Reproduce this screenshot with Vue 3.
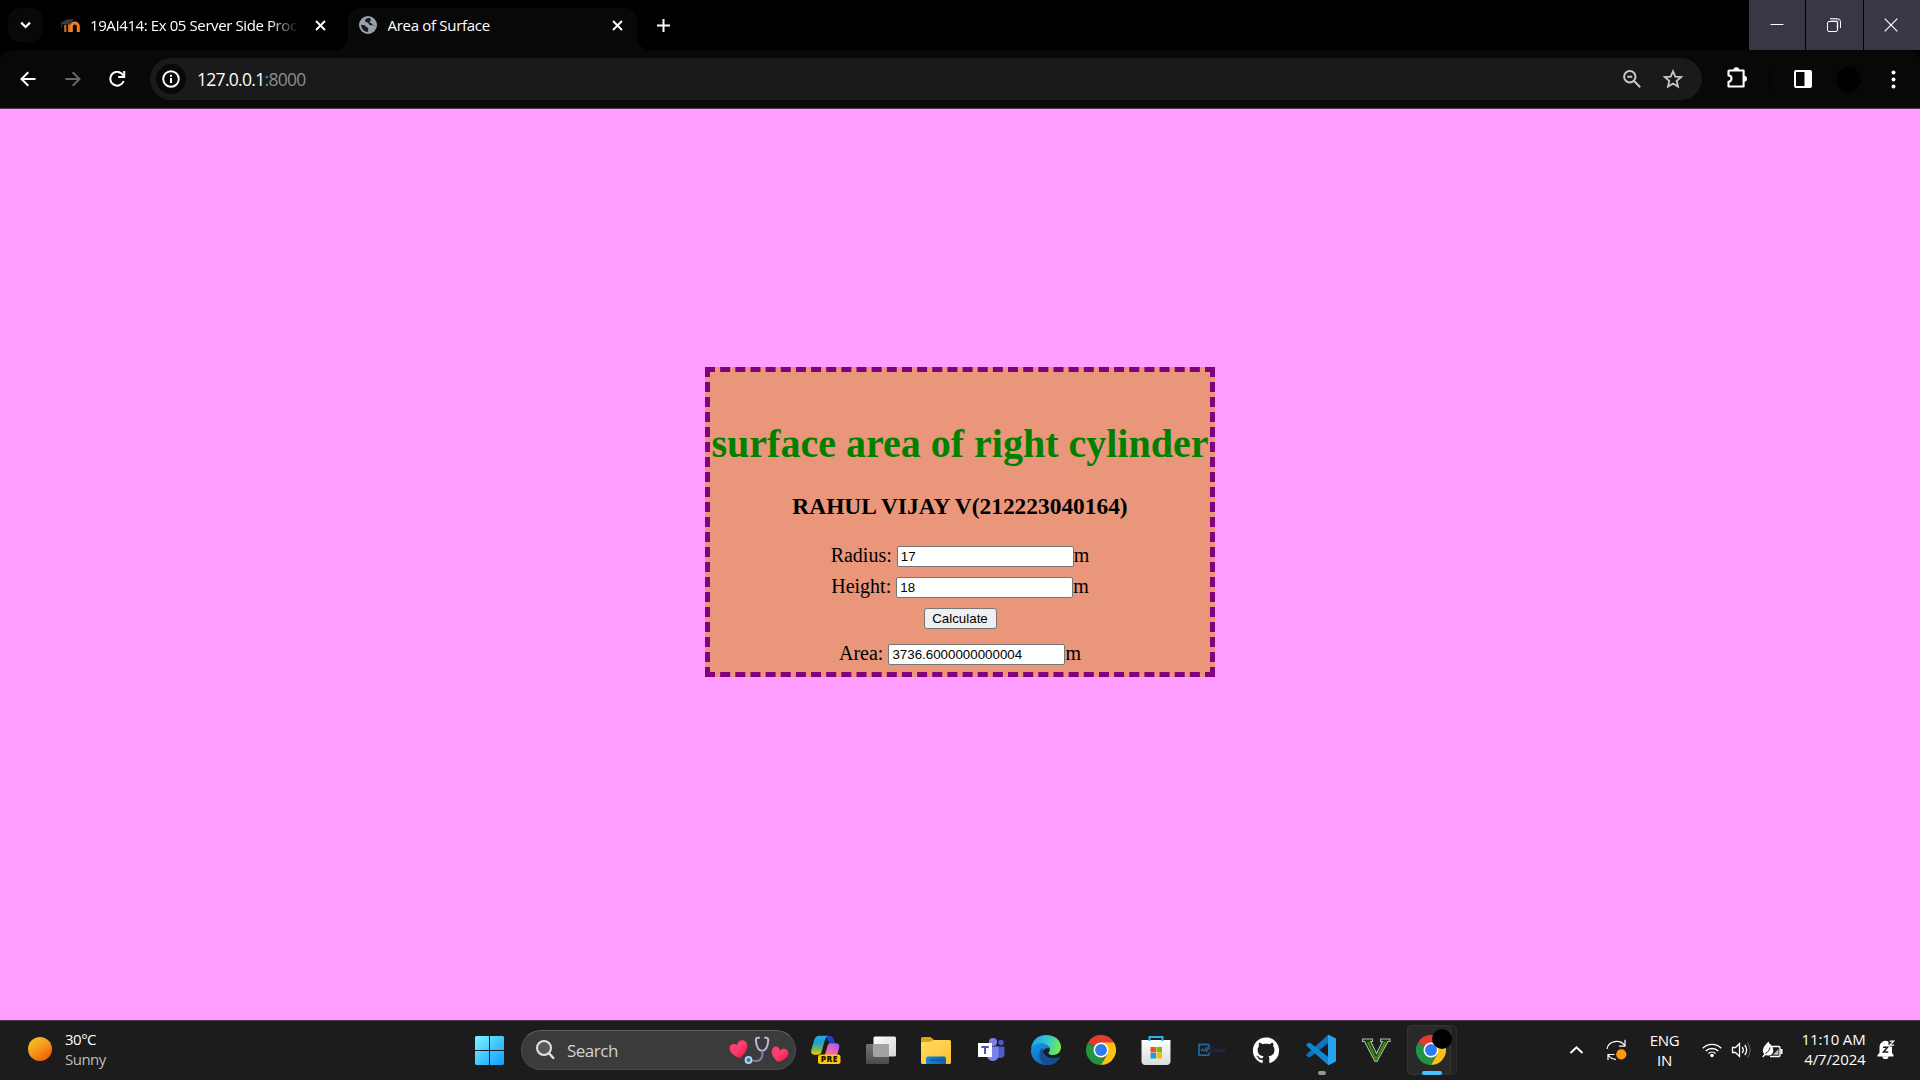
<script setup>
import { ref } from 'vue'

const radius = ref('17')
const height = ref('18')
const area = ref('3736.6000000000004')
</script>

<template>
  <div class="screen">
    <header class="tabstrip">
      <button class="tab-search" aria-label="Search tabs">
        <svg width="12" height="12" viewBox="0 0 12 12"><path d="M1.200 3.600 5.600 8l4.400-4.400" fill="none" stroke="#fff" stroke-width="2.200" /></svg>
      </button>
      <div class="tab inactive">
        <svg class="moodle" width="20" height="16" viewBox="0 0 20 16">
          <path d="M11.300 15V9.500a3.500 3.500 0 0 1 7 0V15" fill="none" stroke="#ee8129" stroke-width="3" />
          <path d="M5.300 15V8M9 15V7" stroke="#c46d2a" stroke-width="2.200" />
          <path d="M0 6 7 2.500l7-.5-2.500 3.500-2 2H3z" fill="#3f3836" />
          <path d="M1.500 6v5" stroke="#37302c" stroke-width="1" />
        </svg>
        <span class="tab-title faded">19AI414: Ex 05 Server Side Proc</span>
        <svg class="x" width="11" height="11" viewBox="0 0 11 11"><path d="m1 1 9 9M10 1l-9 9" stroke="#fff" stroke-width="1.900" /></svg>
      </div>
      <div class="tab active">
        <svg width="18" height="18" viewBox="0 0 18 18">
          <circle cx="9" cy="9" r="9" fill="#9aa0a9" />
          <path d="M10.300 1.900C7.200 2 5.900 3.300 6 5c.1 1.500 2.600 1 3.300 2 .5.900 1.300 2.700 3.200 2.300 1.400-.3 3.600-.3 3.500.7-.5 3-3 5.700-6.300 6-1.400-.2-1-1.500-.4-2.500.6-1.400-.6-1.800-1.600-2.300-.9-1.700-2.800-2.700-5.600-2.500C2.300 12.800 5 15.800 9 16c4 0 7-3 7-7-1.500.5-2.900-.3-3.300-1.500-2.100-.2-2.700-1.800-1.100-2.900.7-1 .2-2-1.300-2.700z" fill="#17191b" />
        </svg>
        <span class="tab-title second">Area of Surface</span>
        <svg class="x" width="11" height="11" viewBox="0 0 11 11"><path d="m1 1 9 9M10 1l-9 9" stroke="#fff" stroke-width="1.900" /></svg>
      </div>
      <svg class="plus" width="13" height="13" viewBox="0 0 13 13"><path d="M6.500 0v13M0 6.500h13" stroke="#fff" stroke-width="2" /></svg>
      <div class="caption">
        <span><svg width="14" height="14" viewBox="0 0 14 14"><path d="M.5 6.500h13" stroke="#fff" /></svg></span>
        <span>
          <svg width="14" height="14" viewBox="0 0 14 14" fill="none" stroke="#fff">
            <path d="M3.500 2.500h7v8" stroke="#82828e" stroke-width="2" />
            <rect x=".5" y="3.500" width="10" height="10" rx="1.500" />
            <path d="M3 .7h7.500a3 3 0 0 1 3 3V10" />
          </svg>
        </span>
        <span><svg width="14" height="14" viewBox="0 0 14 14"><path d="m.7.700 12.600 12.600M13.300.7.700 13.300" stroke="#fff" stroke-width="1.200" /></svg></span>
      </div>
    </header>

    <nav class="toolbar">
      <div class="navs">
        <svg width="16" height="16" viewBox="0 0 16 16"><path d="M15.500 8H2M8.300 1.200 1.500 8l6.800 6.800" fill="none" stroke="#fff" stroke-width="2" /></svg>
        <svg width="16" height="16" viewBox="0 0 16 16"><path d="M.5 8H14M7.700 1.200 14.500 8l-6.800 6.800" fill="none" stroke="#686868" stroke-width="2" /></svg>
        <svg width="17" height="16" viewBox="0 0 17 16"><path d="M14.300 4.500A6.900 6.900 0 1 0 14.700 10" fill="none" stroke="#fff" stroke-width="2" /><path d="M16.200 0v7H9.200V5h5V0z" fill="#fff" /></svg>
      </div>
      <div class="omnibox">
        <span class="info">
          <svg width="18" height="18" viewBox="0 0 18 18"><circle cx="9" cy="9" r="7.800" fill="none" stroke="#fff" stroke-width="1.900" /><path d="M9 8v5M9 4.700v2" stroke="#fff" stroke-width="2" /></svg>
        </span>
        <span class="url">127.0.0.1<i>:8000</i></span>
        <svg class="mag" width="18" height="18" viewBox="0 0 18 18"><circle cx="6.800" cy="6.800" r="5.700" fill="none" stroke="#c8c8c8" stroke-width="2" /><path d="M11 11l6.200 6.200M4.300 6.800h5" stroke="#c8c8c8" stroke-width="2" /></svg>
        <svg width="20" height="20" viewBox="0 0 20 20"><path d="m10 2.300 2.300 5.300 5.800.5-4.400 3.800 1.300 5.700L10 14.600l-5 3 1.300-5.700L1.900 8.100l5.800-.5z" fill="none" stroke="#c8c8c8" stroke-width="1.800" /></svg>
      </div>
      <svg class="puzzle" width="22" height="22" viewBox="0 0 22 22">
        <path d="M3.400 3.500h14.200v16H2.500v-4.800c4 0 4-6.200 0-6.200v-4.100q0-.9.900-.9z" fill="none" stroke="#fff" stroke-width="2.100" stroke-linejoin="round" />
        <path d="M7.300 3.200a3 3 0 0 1 6 0zM18 8.700a3 3 0 0 1 0 6z" fill="#fff" />
      </svg>
      <span class="divider"></span>
      <svg class="panel" width="18" height="18" viewBox="0 0 18 18"><rect x="1" y="1" width="16" height="16" rx="1" fill="none" stroke="#fff" stroke-width="2" /><path d="M10.500 1H17v16h-6.500z" fill="#fff" /></svg>
      <span class="avatar"></span>
      <svg class="dots" width="5" height="19" viewBox="0 0 5 19"><g fill="#fff"><circle cx="2.500" cy="2.500" r="2" /><circle cx="2.500" cy="9.500" r="2" /><circle cx="2.500" cy="16.500" r="2" /></g></svg>
    </nav>

    <main class="page">
      <section class="card">
        <h1>surface area of right cylinder</h1>
        <h3>RAHUL VIJAY V(212223040164)</h3>
        <form @submit.prevent>
          <div class="row">Radius:&nbsp;<input v-model="radius" type="text" />m</div>
          <div class="row">Height:&nbsp;<input v-model="height" type="text" />m</div>
          <div class="row"><button class="calc">Calculate</button></div>
          <div class="row result">Area:&nbsp;<input v-model="area" type="text" />m</div>
        </form>
      </section>
    </main>

    <footer class="taskbar">
      <div class="weather">
        <span class="sun"></span>
        <div class="report"><div class="temp">30°C</div><div class="cond">Sunny</div></div>
      </div>
      <svg class="start" width="29" height="29" viewBox="0 0 29 29">
        <defs><linearGradient id="win" x1="0" y1="0" x2="1" y2="1"><stop offset="0" stop-color="#7df3ff" /><stop offset="1" stop-color="#0c9cff" /></linearGradient></defs>
        <path d="M1 0h13v14H0V1zM15 0h13l1 1v13H15zM0 15h14v14H1l-1-1zM15 15h14v13l-1 1H15z" fill="url(#win)" />
      </svg>
      <div class="search">
        <svg width="19" height="20" viewBox="0 0 19 20"><circle cx="8" cy="8" r="7" fill="#585858" stroke="#e4e4e4" stroke-width="2" /><path d="m13 13.200 4.300 4.800" stroke="#e4e4e4" stroke-width="2.400" stroke-linecap="round" /></svg>
        <span class="search-label">Search</span>
        <svg class="doodle" width="60" height="28" viewBox="0 0 60 28">
          <defs><linearGradient id="heart" x1="0" y1="0" x2="1" y2="1"><stop offset="0" stop-color="#ff3c86" /><stop offset=".5" stop-color="#ff3c68" /><stop offset="1" stop-color="#f0104c" /></linearGradient></defs>
          <path d="M11 22C5 20 1 16.500.6 12.500.2 8.700 5 6.500 8 9.500c.2-5 6.300-7 9-3.600 3.700 4.800-1.500 12.600-6 16.100z" fill="url(#heart)" />
          <path d="M49 25.700c-5.500-4-7.800-9.700-5.200-13.500 2-2.800 6.500-1.800 7.200 2.200 2.600-3 7.600-2 8.300 1.800.8 4-4.300 8.700-10.300 9.500z" fill="url(#heart)" />
          <path d="M30 1.800c-3-.6-3.400 1.200-3 3.700.6 4.800 2 9 5.800 9.300 4.300 0 6-4.500 6.400-10.300.2-2-1-2.900-3-2.700" fill="none" stroke="#c5b4df" stroke-width="2" stroke-linecap="round" />
          <path d="M33 15c1 4 .4 10-6.500 10l-3.500-.5" fill="none" stroke="#8974ac" stroke-width="2.200" />
          <circle cx="19.500" cy="24" r="2.900" fill="#45689c" stroke="#acd5ee" stroke-width="2" />
        </svg>
      </div>

      <div class="apps">
        <span class="app">
          <svg width="30" height="30" viewBox="0 0 30 30">
            <defs>
              <linearGradient id="copA" x1="0" y1="0" x2="0" y2="1"><stop offset="0" stop-color="#20a7f0" /><stop offset=".35" stop-color="#1ba0cf" /><stop offset=".7" stop-color="#70b85a" /><stop offset="1" stop-color="#f2d000" /></linearGradient>
              <linearGradient id="copB" x1="1" y1="0" x2="0" y2="1"><stop offset="0" stop-color="#9c55ee" /><stop offset=".5" stop-color="#e465c4" /><stop offset="1" stop-color="#ff8360" /></linearGradient>
            </defs>
            <path d="M15 .8h3.500q3.200 0 4.300 4l1 3.200h-5.300z" fill="#1a45c8" />
            <path d="M8.500.8h8.500q-2.200 1-3.200 4.500L10.500 17q-.8 2.700-3.500 2.700H4q-5 0-3.600-5L3 5.500Q4.200.8 8.500.8z" fill="url(#copA)" />
            <path d="M19 8.300h5.500q5 0 3.600 5L26 21H12.500q1.500-1 2.200-3.500l2-7q.6-2.200 2.300-2.200z" fill="url(#copB)" />
            <rect x="7" y="19.500" width="22.500" height="9.500" rx="2.500" fill="#ffc60a" />
            <text x="18.400" y="27.400" text-anchor="middle" class="pre">PRE</text>
          </svg>
        </span>
        <span class="app">
          <svg width="30" height="30" viewBox="0 0 30 30">
            <defs><linearGradient id="tv" x1="0" y1="0" x2="1" y2="1"><stop offset="0" stop-color="#fff" /><stop offset="1" stop-color="#d4d4d4" /></linearGradient><linearGradient id="tvb" x2="0" y2="1"><stop offset="0" stop-color="#747474" /><stop offset="1" stop-color="#4b4b4b" /></linearGradient></defs>
            <rect x="0" y="9" width="23" height="20" rx="1.500" fill="url(#tvb)" />
            <rect x="7.500" y="1.500" width="22.500" height="20" rx="1.500" fill="url(#tv)" />
            <path d="M7.500 9H22q1 0 1 1v11.500H7.500z" fill="#a3a3a3" />
          </svg>
        </span>
        <span class="app">
          <svg width="30" height="30" viewBox="0 0 30 30">
            <defs><linearGradient id="fold" x1="0" y1="0" x2="1" y2="1"><stop offset="0" stop-color="#ffdc68" /><stop offset="1" stop-color="#ffc02d" /></linearGradient><linearGradient id="fblue" x2="1" y2="0"><stop offset="0" stop-color="#1389dc" /><stop offset="1" stop-color="#0863b5" /></linearGradient></defs>
            <path d="M0 3.500Q0 2 1.500 2h8L13 5h12v4H0z" fill="#e3a00d" />
            <path d="M0 8.500Q0 7 1.500 7H9l3.500-2h16Q30 5 30 6.500v21q0 1.500-1.500 1.500h-27Q0 29 0 27.500z" fill="url(#fold)" />
            <path d="M5 29v-5.500q0-2 2-2h16q2 0 2 2V29z" fill="url(#fblue)" />
            <path d="M8.500 25h13" stroke="#084c8c" />
          </svg>
        </span>
        <span class="app">
          <svg width="30" height="30" viewBox="0 0 30 30">
            <circle cx="25" cy="7.500" r="2.700" fill="#5059c9" />
            <path d="M20 11.500h7.500q1 0 1 1V19q0 4-4.500 4h-4z" fill="#5059c9" />
            <circle cx="17" cy="7" r="4.100" fill="#7b83eb" />
            <path d="M11 11.500h11.500v8q0 6.500-5.500 6.500-4 0-6-4z" fill="#7b83eb" />
            <rect x="2" y="8" width="14" height="14" fill="#fff" />
            <path d="M5.300 11h7.400v1.900H10v6.200H8v-6.200H5.300z" fill="#4b53bc" />
          </svg>
        </span>
        <span class="app">
          <svg width="30" height="30" viewBox="0 0 30 30">
            <defs><linearGradient id="edgeA" x1="0" y1=".4" x2="1" y2=".6"><stop offset="0" stop-color="#1aa5e3" /><stop offset=".5" stop-color="#35c7d4" /><stop offset="1" stop-color="#76ed47" /></linearGradient><linearGradient id="edgeB" x1="0" y1="0" x2=".7" y2="1"><stop offset="0" stop-color="#159bed" /><stop offset="1" stop-color="#075eb0" /></linearGradient></defs>
            <path d="M0 14C1 5 7 0 15 0c9 0 15 5.500 15 12 0 5-3.500 8-8 8-5 0-5-2-3.500-4 1.500-2.500-1-6-4.500-6C8 8.500 3 9 0 14z" fill="url(#edgeA)" />
            <path d="M0 15c1-5 5-7 9.500-7 4 0 8 2 9.300 5.500-7-2-10 6-5 11.500 3 3 8 3 12 1.500C22 30 17 30.300 14 30 6 29.500-.6 23 0 15z" fill="url(#edgeB)" />
            <path d="M11.500 12.500C7 17 7 26 14.500 30c7 .5 12-3 14.400-7.300.3-.6-.2-1-.8-.7C20 25.500 11 21 11.500 12.500z" fill="#124f91" />
          </svg>
        </span>
        <span class="app">
          <svg width="30" height="30" viewBox="0 0 48 48">
            <path d="M24 24 3.200 12A24 24 0 0 1 44.800 12z" fill="#e33b2e" />
            <path d="M24 24 3.200 12A24 24 0 0 0 24 48L34 30z" fill="#229342" />
            <path d="M24 12h20.800A24 24 0 0 1 24 48l10.400-18z" fill="#fbc116" />
            <circle cx="24" cy="24" r="12" fill="#fff" /><circle cx="24" cy="24" r="9.500" fill="#2f7cf0" />
          </svg>
        </span>
        <span class="app">
          <svg width="30" height="30" viewBox="0 0 30 30">
            <defs><linearGradient id="store" x2="0" y2="1"><stop offset="0" stop-color="#fff" /><stop offset="1" stop-color="#dbdbdb" /></linearGradient></defs>
            <path d="M.5 5h29v21q0 4-4 4h-21q-4 0-4-4z" fill="url(#store)" />
            <path d="M8.500 6V2h13v4" fill="none" stroke="#27b4f0" stroke-width="2" />
            <path d="M9.500 12H15v5.500H9.500z" fill="#f25022" /><path d="M15.500 12H21v5.500h-5.500z" fill="#7fba00" /><path d="M9.500 18H15v5.500H9.500z" fill="#00a4ef" /><path d="M15.500 18H21v5.500h-5.500z" fill="#ffb900" />
          </svg>
        </span>
        <span class="app">
          <svg width="30" height="30" viewBox="0 0 30 30">
            <path d="M13 9.500H3v10.700h10" fill="none" stroke="#1d659b" stroke-width="1.800" />
            <path d="M13 9.500v2.500M13 17.500v3" stroke="#1d659b" stroke-width="1.500" />
            <path d="m5 16 1.500-2 1.500 2 1.500-2 1 2M9.500 13h3.500l-3 4" fill="none" stroke="#28618b" stroke-width="1.300" />
            <path d="M17 13h-2.500v3.500H18l1-2.500 1.500 2.500L22 14l1 2.500L24.500 14l1 2.500 1-2.500v2.500h2V14" fill="none" stroke="#232a48" stroke-width="1.300" />
          </svg>
        </span>
        <span class="app">
          <svg width="30" height="30" viewBox="0 0 30 30">
            <path d="M.5 1h29v28H.5z" fill="#211e20" />
            <path transform="translate(1.900 2.400) scale(1.640)" fill="#fff" d="M8 0C3.580 0 0 3.580 0 8c0 3.540 2.290 6.530 5.470 7.590.4.070.55-.17.55-.38 0-.19-.01-.82-.01-1.490-2.010.37-2.530-.49-2.690-.94-.09-.23-.48-.94-.82-1.130-.28-.15-.68-.52-.01-.53.63-.01 1.080.58 1.230.82.72 1.210 1.870.87 2.330.66.07-.52.28-.87.51-1.070-1.780-.2-3.640-.89-3.640-3.950 0-.87.31-1.590.82-2.150-.08-.2-.36-1.020.08-2.120 0 0 .67-.21 2.200.82.64-.18 1.320-.27 2-.27s1.360.09 2 .27c1.530-1.040 2.200-.82 2.200-.82.44 1.100.16 1.920.08 2.120.51.56.82 1.270.82 2.150 0 3.070-1.870 3.750-3.650 3.950.29.25.54.73.54 1.480 0 1.070-.01 1.930-.01 2.200 0 .21.15.46.55.38A8.010 8.010 0 0 0 16 8c0-4.420-3.580-8-8-8z" />
          </svg>
        </span>
        <span class="app">
          <svg width="30" height="30" viewBox="0 0 30 30">
            <path d="M22 0v8.300L4 22.200 2.500 22.300.5 20.500Q0 19.700.7 19z" fill="#0b75bf" />
            <path d="M22 30v-8.300L4 7.800 2.500 7.700.5 9.500Q0 10.300.7 11z" fill="#0e87d3" />
            <path d="M22 0h1l7 3.500v23L23 30h-1z" fill="#26a5ee" />
          </svg>
          <i class="pip"></i>
        </span>
        <span class="app">
          <svg width="30" height="30" viewBox="0 0 30 30">
            <path d="M1.500 4h10v2.500H9.700l5.800 12 6-12h-2V4h9.500v2.500h-2L16 26.500h-2L3.500 6.500h-2z" fill="#163c0e" stroke="#b5b6b3" stroke-width="1.100" />
            <path d="m7 7 8 17.500 3.500-6.500" fill="none" stroke="#3f8a10" stroke-width="2" />
            <path d="m24.500 7-7 13" fill="none" stroke="#3f8a10" stroke-width="2.400" />
          </svg>
        </span>
        <span class="app running">
          <i class="tile-back"></i><i class="tile"></i>
          <svg width="30" height="30" viewBox="0 0 48 48">
            <path d="M24 24 3.200 12A24 24 0 0 1 44.800 12z" fill="#e33b2e" />
            <path d="M24 24 3.200 12A24 24 0 0 0 24 48L34 30z" fill="#229342" />
            <path d="M24 12h20.800A24 24 0 0 1 24 48l10.400-18z" fill="#fbc116" />
            <circle cx="24" cy="24" r="12" fill="#fff" /><circle cx="24" cy="24" r="9.500" fill="#2f7cf0" />
          </svg>
          <i class="badge"></i><i class="pip on"></i>
        </span>
      </div>

      <div class="tray">
        <span class="cell wide"><svg width="15" height="10" viewBox="0 0 15 10"><path d="m1.500 8 6-5.800 6 5.800" fill="none" stroke="#fff" stroke-width="1.900" /></svg></span>
        <span class="cell wide">
          <svg class="sync" width="22" height="22" viewBox="0 0 22 22"><path d="M1 10C2.500 1.500 14 0 18.800 6.500M19 .7v6.500h-6M10 20.300c-3 0-6-1.500-7.800-4.300M2 21v-5.500h6.500" fill="none" stroke="#fff" stroke-width="1.200" /><circle cx="15.300" cy="15.300" r="5.100" fill="#ff9a0a" /></svg>
        </span>
        <span class="lang"><b>ENG</b><b>IN</b></span>
        <span class="cell">
          <svg width="20" height="16" viewBox="0 0 20 16"><g fill="none" stroke="#fff" stroke-width="1.400"><path d="M.8 6.200a13 13 0 0 1 18.400 0" /><path d="M3.700 9a9 9 0 0 1 12.600 0" /><path d="M6.500 11.600a5 5 0 0 1 7 0" /></g><circle cx="10" cy="13.500" r="1.800" fill="#fff" /></svg>
        </span>
        <span class="cell">
          <svg width="22" height="18" viewBox="0 0 22 18"><path d="M1.500 6.500h3l4-4v13l-4-4h-3z" fill="none" stroke="#fff" stroke-width="1.300" /><path d="M11.300 6q2 3 0 6M13.800 4q3.700 5 0 10" fill="none" stroke="#fff" stroke-width="1.300" /><path d="M16.600 1.500q5 7.500 0 15" fill="none" stroke="#555" stroke-width="1.300" /></svg>
        </span>
        <span class="cell">
          <svg width="22" height="18" viewBox="0 0 22 18"><path d="M11 5.500h6.500q1.500 0 1.500 1.500v7q0 1.500-1.500 1.500H9" fill="none" stroke="#fff" stroke-width="1.400" /><path d="M19.700 8h1.800v5h-1.800z" fill="#fff" /><path d="M12 13.800h5.500V8z" fill="#bbb" /><path d="M7.500 .5c.5 3 4.800 3.500 4.800 9 0 4.500-4.500 6-7.500 4.500L2 16.500l-.8-.8L3.300 13C-.3 9 3.500 4.500 7.500.5z" fill="#fff" /><path d="M4.500 12.500C7 11 8.500 9 9 6.500" fill="none" stroke="#1c1c1c" /></svg>
        </span>
        <span class="clock"><b class="time">11:10 AM</b><b class="date">4/7/2024</b></span>
        <svg class="bell" width="18" height="19" viewBox="0 0 18 19"><path d="M2.500 13V7A6 6 0 0 1 11.500 1.600V5H15v8l1.500 2v1.500H.5V15z" fill="#fff" /><path d="M5.500 16.300h6a3 3 0 0 1-6 0z" fill="#fff" /><path d="M6 7.300h4.500l-4 4.700h4.800" fill="none" stroke="#1c1c1c" stroke-width="1.500" /><path d="M11.500 0H18v6.500h-5.500z" fill="#1c1c1c" /><path d="M12.700 1.200h4l-4 3.900h4.300" fill="none" stroke="#fff" stroke-width="1.200" /></svg>
      </div>
    </footer>
  </div>
</template>

<style>
html, body { margin: 0; overflow: hidden; background: #000; }
</style>

<style scoped>
* { box-sizing: border-box; }
svg { display: block; flex: none; }
button { padding: 0; border: 0; }
.screen { display: flex; flex-direction: column; width: 1920px; height: 1080px; font-family: "Open Sans", "Noto Sans", sans-serif; color: #fff; }

.tabstrip { display: flex; align-items: center; height: 50px; padding-left: 8px; background: #000; flex: none; }
.tab-search { display: flex; align-items: center; justify-content: center; width: 35px; height: 34px; border-radius: 12px; background: #080808; }
.tab { display: flex; align-items: center; height: 50px; font-size: 15px; white-space: nowrap; }
.inactive { width: 305px; padding-left: 17px; }
.tab-title { margin-left: 10px; line-height: 20px; letter-spacing: -0.4px; overflow: hidden; }
.second { margin-left: 10.500px; letter-spacing: -0.300px; }
.faded { width: 209px; -webkit-mask-image: linear-gradient(90deg, #000 180px, transparent 209px); mask-image: linear-gradient(90deg, #000 180px, transparent 209px); }
.inactive .x { margin-left: 15.500px; }
.active { position: relative; width: 289px; height: 42px; margin-top: 8px; padding: 0 14px 8px 11px; background: #080808; border-radius: 12px 12px 0 0; }
.active::before, .active::after { content: ""; position: absolute; bottom: 0; width: 14px; height: 14px; }
.active::before { left: -14px; background: radial-gradient(circle at 0 0, transparent 14px, #080808 14.500px); }
.active::after { right: -14px; background: radial-gradient(circle at 100% 0, transparent 14px, #080808 14.500px); }
.active .x { margin-left: auto; }
.plus { margin-left: 19.500px; }
.caption { display: flex; gap: 1px; margin-left: auto; height: 50px; }
.caption span { display: flex; align-items: center; justify-content: center; width: 56.500px; background: #373746; }
.caption span:last-child { padding-right: 1px; }

.toolbar { position: relative; display: flex; align-items: center; height: 59px; background: #080808; border-bottom: 1px solid #5a3a5b; border-radius: 12px 12px 0 0; flex: none; }
.navs { display: flex; align-items: center; gap: 28.500px; width: 150px; padding-left: 20px; }
.omnibox { display: flex; align-items: center; width: 1552px; height: 42px; padding: 0 20px 0 6px; border-radius: 21px; background: #1a1a1a; }
.info { display: flex; align-items: center; justify-content: center; width: 30px; height: 30px; border-radius: 50%; background: #080808; }
.url { margin-left: 11px; font-size: 17.500px; line-height: 24px; letter-spacing: -0.7px; }
.url i { font-style: normal; color: #8c8c8c; }
.mag { margin: 0 21.500px 0 auto; }
.omnibox svg:last-child { margin-right: -0.5px; }
.puzzle { margin: -2px 0 0 23.500px; }
.divider { width: 2px; height: 20px; margin-left: 21px; background: #030303; }
.panel { margin-left: 23px; }
.avatar { width: 25px; height: 25px; margin-left: 24px; border-radius: 50%; background: #000; }
.dots { margin-left: 30px; }

.page { display: flex; justify-content: center; align-items: flex-start; height: 911px; padding-top: 258px; background: #ff9eff; flex: none; }
.card { width: 510px; height: 310px; border: 5px dashed #800080; background: #e9967a; color: #000; font-family: "Liberation Serif", serif; text-align: center; white-space: nowrap; }
h1 { margin: 49px 0 0; font-size: 40px; line-height: 46px; color: #008000; }
h3 { margin: 25px 0 21px; font-size: 23.400px; line-height: 28px; }
.row { display: flex; justify-content: center; align-items: flex-start; height: 31px; font-size: 20px; line-height: 28px; }
.row input { width: 177px; height: 21px; margin-top: 5px; padding: 1px 3px; border: 1px solid #767676; border-radius: 2px; background: #fff; color: #000; font: 13.333px "Liberation Sans", sans-serif; outline: none; }
.calc { width: 73px; height: 21px; margin-top: 5px; border: 1px solid #767676; border-radius: 3px; background: #efefef; color: #000; font: 13.333px "Liberation Sans", sans-serif; }
.result { margin-top: 5px; }

.taskbar { display: flex; align-items: center; height: 60px; background: #1c1c1c; border-top: 1px solid #474247; flex: none; }
.weather { display: flex; align-items: center; width: 475px; padding-left: 28px; font-size: 15px; line-height: 20px; letter-spacing: -0.5px; }
.report { margin-top: -4px; }
.sun { width: 24px; height: 24px; margin: -3px 13px 0 0; border-radius: 50%; background: linear-gradient(145deg, #efc02d 10%, #f79c1c 45%, #ee6209 85%); }
.cond { color: #bcbcbc; }
.start { margin-top: 0; }
.search { display: flex; align-items: center; width: 275px; height: 40px; margin: -1px 2.500px 0 17px; padding: 0 6px 0 14px; border: 1px solid #4c4c4c; border-top-color: #626262; border-radius: 20px; background: #3b3b3b; }
.search-label { margin-left: 12px; font-size: 17px; letter-spacing: -0.5px; color: #d2d2d2; }
.doodle { margin-left: auto; }
.apps { display: flex; width: 660px; height: 59px; }
.app { position: relative; display: flex; align-items: center; justify-content: center; width: 55px; height: 59px; padding-bottom: 1px; }
.app svg { position: relative; }
.pre { font: 800 8.500px "Open Sans", sans-serif; letter-spacing: .5px; fill: #201900; }
.pip { position: absolute; left: 24px; bottom: 5px; width: 8px; height: 4px; border-radius: 2px; background: #979797; }
.pip.on { left: 18px; width: 20px; background: #4cc2ff; }
.tile, .tile-back { position: absolute; top: 4px; left: 3px; width: 44px; height: 50px; border: 1px solid #363636; border-radius: 5px; background: #292929; }
.tile-back { width: 50px; background: #222; border-color: #2d2d2d; }
.badge { position: absolute; left: 28px; top: 8px; width: 20px; height: 20px; border-radius: 50%; background: #000; }

.tray { display: flex; align-items: center; height: 59px; margin-left: 98px; padding-bottom: 2px; }
.cell { display: flex; align-items: center; justify-content: center; width: 30px; }
.cell.wide { width: 40px; }
.tray b { display: block; font-weight: 400; }
.lang { width: 56px; margin-right: 4px; text-align: center; font-size: 15px; line-height: 20px; letter-spacing: -0.3px; }
.clock { width: 79px; margin-top: -2px; text-align: right; font-size: 15px; line-height: 20px; letter-spacing: -0.150px; white-space: nowrap; }
.bell { margin-left: 11px; }
</style>
